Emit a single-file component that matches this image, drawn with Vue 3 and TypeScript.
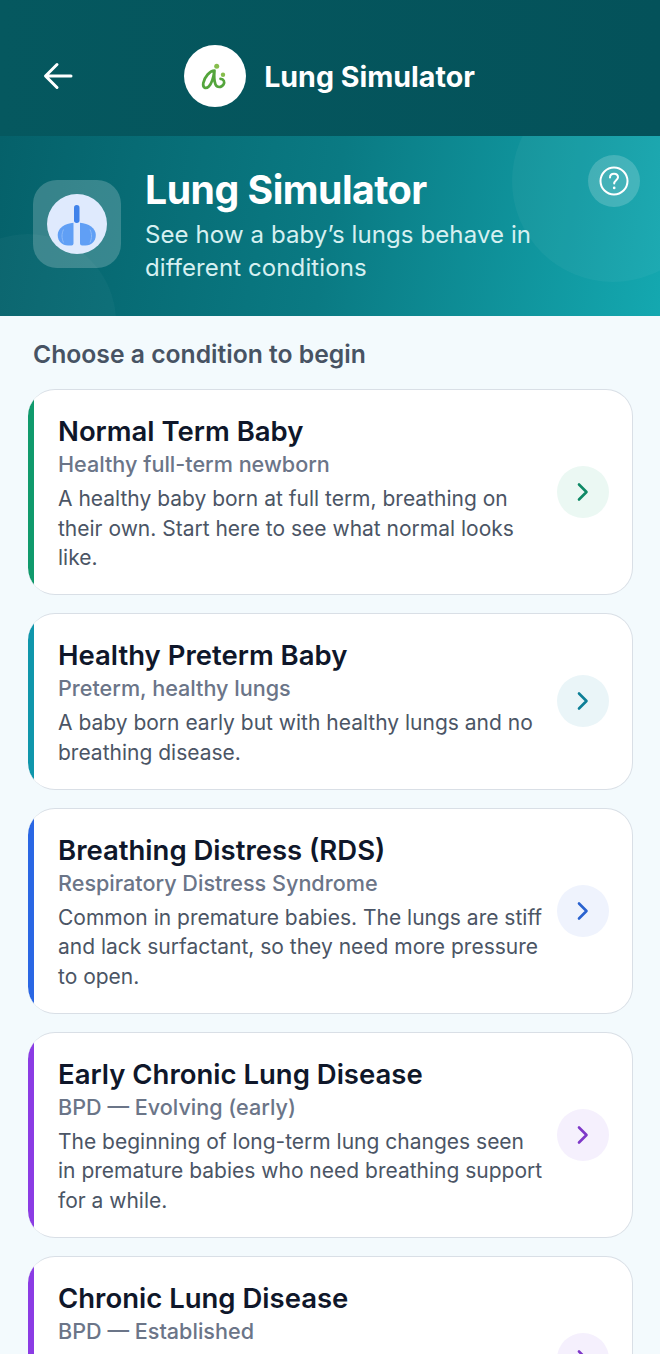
<template>
  <div class="page">
    <div class="notch"></div>
    <header class="topbar">
      <button class="back" aria-label="Back">
        <svg width="32" height="32" viewBox="0 0 32 32" fill="none" stroke="#fff" stroke-width="3" stroke-linecap="round" stroke-linejoin="round">
          <path d="M29 16H4M15 4.500 3.500 16 15 27.500" />
        </svg>
      </button>
      <div class="brand">
        <div class="brand-logo">
          <svg width="30" height="32" viewBox="0 0 30 32" fill="none">
            <path d="M14.500 10.500C10 10.500 4.500 17 3.300 23C2.500 27.500 5.500 29.500 8.800 26.500C12 23.500 13.500 17 14.500 10.500C14 16 14 21 15.500 24.500C17 27.800 21.500 27.800 23.500 24.500C25 22 23.800 18.800 20.500 18.800" stroke="#54a53c" stroke-width="2.700" stroke-linecap="round" />
            <circle cx="16.700" cy="6.300" r="2.500" fill="#86bd4c" />
            <circle cx="23" cy="14.800" r="2.200" fill="#86bd4c" />
          </svg>
        </div>
        <span class="brand-name">Lung Simulator</span>
      </div>
    </header>

    <section class="hero">
      <div class="blob blob-right"></div>
      <div class="blob blob-left"></div>
      <div class="hero-icon">
        <div class="hero-disc">
          <svg width="60" height="60" viewBox="0 0 60 60" fill="none">
            <rect x="27" y="11" width="5.500" height="18" rx="2.700" fill="#3f82ea" />
            <path d="M26.500 28.800C18 29.500 10.700 34 10.700 41C10.700 47 15 51.500 21 51.500H24.500Q26.500 51.500 26.500 49.500Z" fill="#609ff5" />
            <path d="M33 28.800C41.500 29.500 48.800 34 48.800 41C48.800 47 44.500 51.500 38.500 51.500H35Q33 51.500 33 49.500Z" fill="#609ff5" />
            <path d="M16.500 35.500C14.500 40 14.500 44 16.500 48.500M43 35.500C45 40 45 44 43 48.500" stroke="#8cbaf8" stroke-width="1" />
          </svg>
        </div>
      </div>
      <div class="hero-text">
        <h1>Lung Simulator</h1>
        <p>See how a baby’s lungs behave in different conditions</p>
      </div>
      <button class="help" aria-label="Help">
        <svg width="30" height="30" viewBox="0 0 30 30" fill="none" stroke="#fff" stroke-width="2" stroke-linecap="round">
          <circle cx="15" cy="15" r="13.500" />
          <path d="M11 11.500C11 9 13 7.800 15 7.800C17.300 7.800 19 9.300 19 11.300C19 14 15.200 14.500 15.200 17.500" />
          <path d="M15.200 21.800V21.900" stroke-width="2.600" />
        </svg>
      </button>
    </section>

    <main class="content">
      <h2>Choose a condition to begin</h2>
      <div class="list">
        <article
          v-for="item in conditions"
          :key="item.title"
          class="card"
          :style="{ background: `linear-gradient(90deg, ${item.color} 6px, #fff 6px)` }"
        >
          <div class="card-text">
            <h3>{{ item.title }}</h3>
            <h4>{{ item.subtitle }}</h4>
            <p v-if="item.text">{{ item.text }}</p>
          </div>
          <div class="go" :style="{ background: item.tint }">
            <svg width="16" height="22" viewBox="0 0 16 22" fill="none" :stroke="item.arrow" stroke-width="2.600" stroke-linecap="round" stroke-linejoin="round">
              <path d="M4 3.500 11.500 11 4 18.500" />
            </svg>
          </div>
        </article>
      </div>
    </main>
  </div>
</template>

<script setup lang="ts">
interface Condition {
  title: string
  subtitle: string
  text?: string
  color: string
  tint: string
  arrow: string
}

const conditions: Condition[] = [
  {
    title: 'Normal Term Baby',
    subtitle: 'Healthy full-term newborn',
    text: 'A healthy baby born at full term, breathing on their own. Start here to see what normal looks like.',
    color: '#109a6c',
    tint: '#ebf8f3',
    arrow: '#0f8a66',
  },
  {
    title: 'Healthy Preterm Baby',
    subtitle: 'Preterm, healthy lungs',
    text: 'A baby born early but with healthy lungs and no breathing disease.',
    color: '#0f96ab',
    tint: '#eaf5f8',
    arrow: '#0e7f97',
  },
  {
    title: 'Breathing Distress (RDS)',
    subtitle: 'Respiratory Distress Syndrome',
    text: 'Common in premature babies. The lungs are stiff and lack surfactant, so they need more pressure to open.',
    color: '#2a67e4',
    tint: '#eff3fd',
    arrow: '#2a62cf',
  },
  {
    title: 'Early Chronic Lung Disease',
    subtitle: 'BPD — Evolving (early)',
    text: 'The beginning of long-term lung changes seen in premature babies who need breathing support for a while.',
    color: '#8b3ce4',
    tint: '#f5f0fd',
    arrow: '#7e38c8',
  },
  {
    title: 'Chronic Lung Disease',
    subtitle: 'BPD — Established',
    color: '#8b3ce4',
    tint: '#f5f0fd',
    arrow: '#7e38c8',
  },
]
</script>

<style>
html,
body {
  margin: 0;
  background: #f3fafd;
}
</style>

<style scoped>
.page {
  position: relative;
  width: 660px;
  height: 1354px;
  overflow: hidden;
  background: #f3fafd;
  font-family: Inter, "Liberation Sans", sans-serif;
}

.notch {
  position: absolute;
  top: 0;
  left: 240px;
  width: 180px;
  height: 3px;
  background: #0b0f10;
  border-radius: 0 0 12px 12px;
}

.topbar {
  position: relative;
  height: 136px;
  box-sizing: border-box;
  padding-top: 16px;
  display: flex;
  align-items: center;
  justify-content: center;
  background: linear-gradient(90deg, #05585f 0%, #04525a 100%);
}

.back {
  position: absolute;
  left: 42px;
  top: 60px;
  padding: 0;
  border: 0;
  background: none;
  display: flex;
}

.brand {
  display: flex;
  align-items: center;
  gap: 18px;
  margin-left: -1px;
}

.brand-logo {
  width: 62px;
  height: 62px;
  border-radius: 50%;
  background: #fff;
  display: flex;
  align-items: center;
  justify-content: center;
}

.brand-name {
  color: #fff;
  font-size: 28.600px;
  font-weight: 700;
}

.hero {
  position: relative;
  height: 180px;
  box-sizing: border-box;
  padding: 0 0 0 33px;
  display: flex;
  align-items: center;
  gap: 24px;
  overflow: hidden;
  background: linear-gradient(100deg, #05616a 0%, #0a7a83 50%, #14a8b0 100%);
}

.blob {
  position: absolute;
  border-radius: 50%;
  background: rgba(255, 255, 255, 0.04);
}

.blob-right {
  left: 512px;
  top: -56px;
  width: 202px;
  height: 202px;
}

.blob-left {
  left: -60px;
  top: 98px;
  width: 176px;
  height: 176px;
  background: rgba(255, 255, 255, 0.03);
}

.hero-icon {
  position: relative;
  width: 88px;
  height: 88px;
  flex: none;
  margin-bottom: 4px;
  border-radius: 24px;
  background: rgba(255, 255, 255, 0.2);
  display: flex;
  align-items: center;
  justify-content: center;
}

.hero-disc {
  width: 60px;
  height: 60px;
  border-radius: 50%;
  background: #dfeafd;
}

.hero-text {
  position: relative;
  width: 420px;
  margin-bottom: 2px;
}

.hero-text h1 {
  margin: 0 0 6px;
  color: #fff;
  font-size: 39.200px;
  line-height: 45px;
  font-weight: 700;
  letter-spacing: -0.5px;
}

.hero-text p {
  margin: 0;
  color: #d6f0f1;
  font-size: 24px;
  line-height: 33px;
  letter-spacing: 0.1px;
}

.help {
  position: absolute;
  left: 588px;
  top: 19px;
  width: 52px;
  height: 52px;
  padding: 0;
  border: 0;
  border-radius: 50%;
  background: rgba(255, 255, 255, 0.18);
  display: flex;
  align-items: center;
  justify-content: center;
}

.content {
  padding: 22px 27px 0 28px;
}

.content h2 {
  margin: 0 0 19px 5px;
  color: #475363;
  font-size: 24.700px;
  line-height: 32px;
  font-weight: 600;
}

.list {
  display: flex;
  flex-direction: column;
  gap: 18px;
}

.card {
  box-sizing: border-box;
  display: flex;
  align-items: center;
  gap: 13px;
  padding: 25px 23px 21.500px 30px;
  border: 1.500px solid #d9dfe6;
  border-left: 0;
  border-radius: 27px;
}

.card:last-child {
  min-height: 207px;
}

.card-text {
  flex: 1;
  min-width: 0;
  align-self: flex-start;
}

.card h3 {
  margin: 0;
  color: #0f172a;
  font-size: 27.500px;
  line-height: 32px;
  font-weight: 600;
}

.card h4 {
  margin: 3px 0 6px;
  color: #6b7588;
  font-size: 21.600px;
  line-height: 28px;
  font-weight: 500;
}

.card p {
  margin: 0;
  color: #4b5565;
  font-size: 21px;
  line-height: 29.500px;
}

.go {
  width: 52px;
  height: 52px;
  flex: none;
  margin-bottom: 3.500px;
  border-radius: 50%;
  display: flex;
  align-items: center;
  justify-content: center;
}
</style>
